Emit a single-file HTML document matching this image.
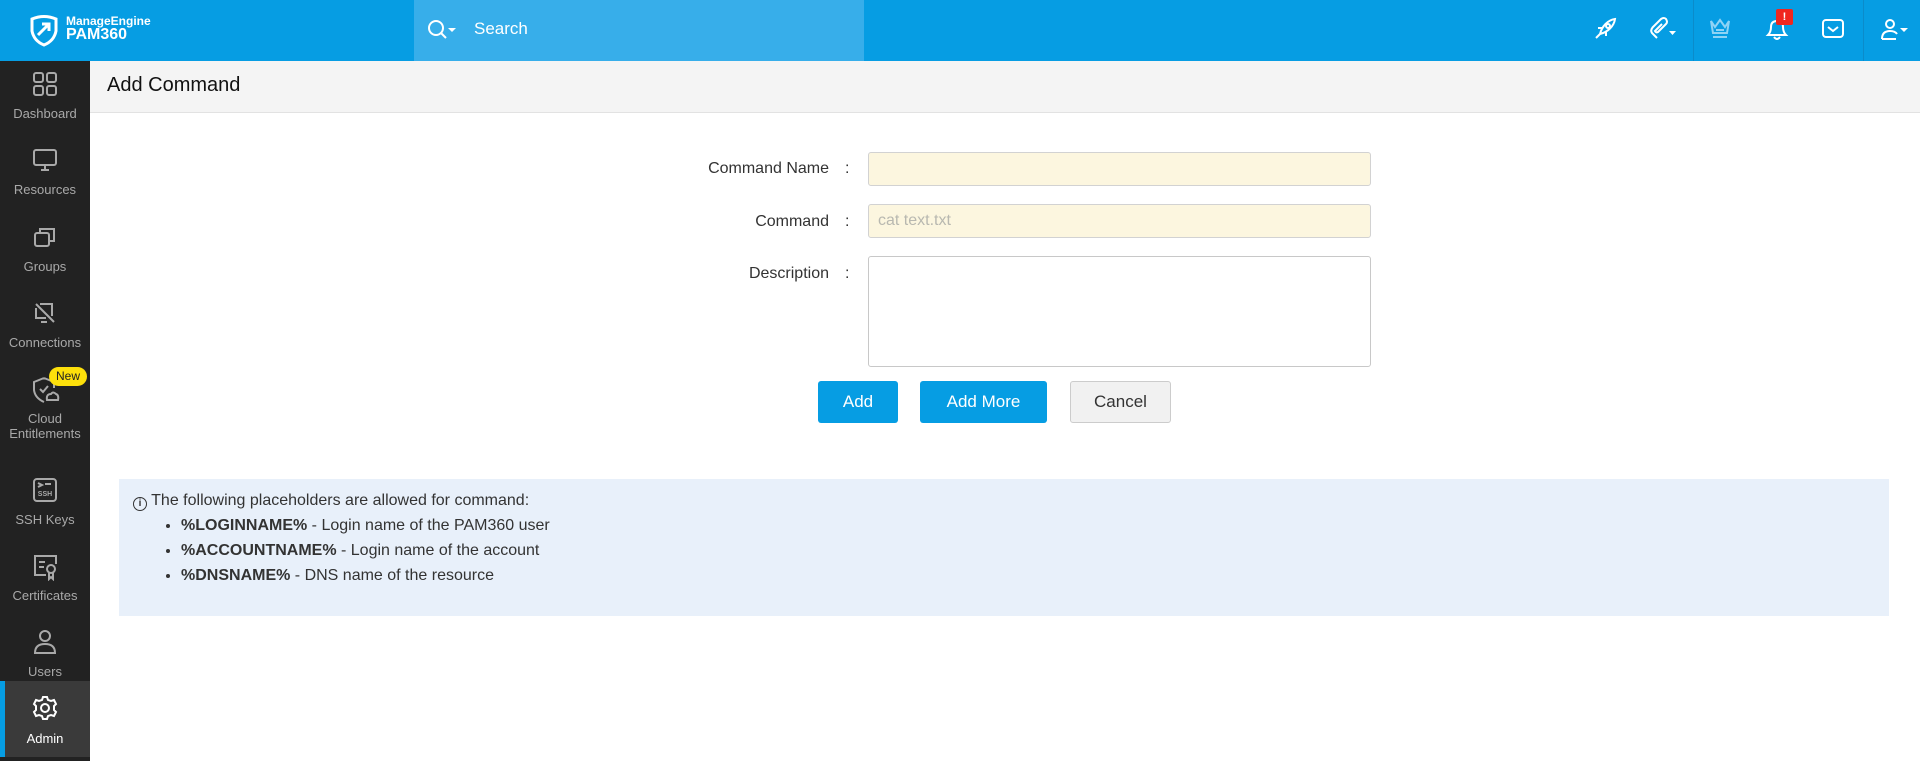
<!DOCTYPE html>
<html><head><meta charset="utf-8"><style>
*{box-sizing:border-box;margin:0;padding:0}
body{width:1920px;height:761px;overflow:hidden;font-family:"Liberation Sans",sans-serif;background:#fff;position:relative}
.top{position:absolute;left:0;top:0;width:1920px;height:61px;background:#069de3}
.search{position:absolute;left:414px;top:0;width:450px;height:61px;background:#37aeea;color:#fff;font-size:17px}
.side{position:absolute;left:0;top:61px;width:90px;height:700px;background:#222}
.it{position:absolute;left:0;width:90px;height:76px;color:#a9a9a9;font-size:13px;text-align:center}
.it svg{position:absolute;left:32px;top:10px}
.it span{position:absolute;left:0;right:0;top:45px;line-height:15px}
.ph{position:absolute;left:90px;top:61px;right:0;height:52px;background:#f4f4f4;border-bottom:1px solid #e2e2e2;font-size:20px;color:#111;padding:13px 17px}
.lbl{position:absolute;width:200px;left:629px;text-align:right;font-size:16px;color:#333}
.col{position:absolute;left:845px;font-size:16px;color:#333}
.inp{position:absolute;left:868px;width:503px;border:1px solid #d2d2d2;border-radius:3px;background:#fcf6df}
.btn{position:absolute;top:381px;height:42px;border-radius:3px;font-size:17px;text-align:center;line-height:42px}
.info{position:absolute;left:119px;top:479px;width:1770px;height:137px;background:#e8f0fa;font-size:16px;color:#333;padding:13px 14px}
.info ul{margin-left:48px;margin-top:2px}
.info li{line-height:25px}
</style></head><body>
<div class="top">
 <svg style="position:absolute;left:28px;top:13px" width="32" height="34" viewBox="0 0 32 34" fill="none" stroke="#fff" stroke-width="3"><path d="M4 6 Q16 1 28 6 V18 Q26 28 16 32 Q6 28 4 18Z"/><path d="M10 22 L21 11 M14 11 H21 V18"/></svg>
 <div style="position:absolute;left:66px;top:14px;color:#fff;font-weight:bold;font-size:12px">ManageEngine</div>
 <div style="position:absolute;left:66px;top:26px;color:#fff;font-weight:bold;font-size:16px">PAM360</div>
 <div class="search">
  <svg style="position:absolute;left:12px;top:18px" width="32" height="24" viewBox="0 0 32 24" fill="none" stroke="#fff" stroke-width="2"><circle cx="10" cy="10" r="7"/><path d="M15 15 L20 20"/><path d="M22 10 h8 l-4 4z" fill="#fff" stroke="none"/></svg>
  <span style="position:absolute;left:60px;top:19px">Search</span>
 </div>
 <svg style="position:absolute;left:1592px;top:16px" width="26" height="26" viewBox="0 0 26 26" fill="none" stroke="#fff" stroke-width="2"><path d="M8 18 C10 10 16 4 23 3 C22 10 16 16 8 18Z M6 12 L10 12 M14 20 L14 16 M4 22 L8 18"/><circle cx="16" cy="10" r="2"/></svg>
 <svg style="position:absolute;left:1648px;top:16px" width="30" height="26" viewBox="0 0 30 26" fill="none" stroke="#fff" stroke-width="2"><path d="M9 22 L4 17 Q2 14 5 11 L13 3 Q16 1 18 3 Q20 6 18 8 L10 16 Q8 17 7 15 L14 8"/><path d="M21 15 h7 l-3.5 4z" fill="#fff" stroke="none"/></svg>
 <div style="position:absolute;left:1693px;top:0;width:1px;height:61px;background:#0b8bca"></div>
 <svg style="position:absolute;left:1707px;top:17px" width="26" height="24" viewBox="0 0 26 24" fill="none" stroke="#8fd3f5" stroke-width="2"><path d="M4 4 L8 10 L13 3 L18 10 L22 4 L20 16 H6Z M9 13 H17 M6 20 H20"/></svg>
 <svg style="position:absolute;left:1763px;top:16px" width="28" height="26" viewBox="0 0 28 26" fill="none" stroke="#fff" stroke-width="2"><path d="M5 19 Q8 16 8 11 Q8 5 14 5 Q20 5 20 11 Q20 16 23 19Z M11 21 Q14 25 17 21"/></svg>
 <div style="position:absolute;left:1776px;top:9px;width:17px;height:16px;background:#f0261f;border-radius:2px;color:#fff;font-size:11px;font-weight:bold;text-align:center;line-height:16px">!</div>
 <svg style="position:absolute;left:1821px;top:18px" width="24" height="22" viewBox="0 0 24 22" fill="none" stroke="#fff" stroke-width="2"><rect x="2" y="2" width="20" height="17" rx="3"/><path d="M7 9 L12 13 L17 9"/></svg>
 <div style="position:absolute;left:1863px;top:0;width:1px;height:61px;background:#0b8bca"></div>
 <svg style="position:absolute;left:1880px;top:17px" width="30" height="26" viewBox="0 0 30 26" fill="none" stroke="#fff" stroke-width="2"><circle cx="10" cy="7" r="4"/><path d="M2 22 Q2 14 10 14 Q15 14 17 17 M2 22 H16"/><path d="M20 11 h8 l-4 4z" fill="#fff" stroke="none"/></svg>
</div>
<div class="side">
 <div class="it" style="top:0"><svg width="26" height="26" viewBox="0 0 26 26" fill="none" stroke="#a9a9a9" stroke-width="2"><rect x="2" y="2" width="9" height="9" rx="2"/><rect x="15" y="2" width="9" height="9" rx="2"/><rect x="2" y="15" width="9" height="9" rx="2"/><rect x="15" y="15" width="9" height="9" rx="2"/></svg><span>Dashboard</span></div>
 <div class="it" style="top:76px"><svg width="26" height="26" viewBox="0 0 26 26" fill="none" stroke="#a9a9a9" stroke-width="2"><rect x="2" y="3" width="22" height="15" rx="2"/><path d="M9 23 H17 M13 18 V23"/></svg><span>Resources</span></div>
 <div class="it" style="top:153px"><svg width="26" height="26" viewBox="0 0 26 26" fill="none" stroke="#a9a9a9" stroke-width="2"><rect x="3" y="9" width="14" height="13" rx="2"/><path d="M8 9 V5 H22 V17 H17"/></svg><span>Groups</span></div>
 <div class="it" style="top:229px"><svg width="26" height="26" viewBox="0 0 26 26" fill="none" stroke="#a9a9a9" stroke-width="2"><path d="M4 4 L22 22 M8 4 H20 V16 M4 8 V18 H14 M9 22 H15"/></svg><span>Connections</span></div>
 <div class="it" style="top:305px;height:90px"><svg width="28" height="28" viewBox="0 0 28 28" fill="none" stroke="#a9a9a9" stroke-width="2"><path d="M12 2 L22 6 V12 M12 2 L2 6 V14 Q3 22 12 26"/><path d="M8 13 L11 16 L16 10"/><path d="M15 24 Q14 18 19 18 Q21 15 24 18 Q27 19 26 24Z"/></svg><span style="top:45px">Cloud<br>Entitlements</span></div>
 <div style="position:absolute;left:49px;top:306px;width:38px;height:19px;background:#fde00b;border-radius:10px;color:#222;font-size:12px;text-align:center;line-height:19px">New</div>
 <div class="it" style="top:406px"><svg width="26" height="26" viewBox="0 0 26 26" fill="none" stroke="#a9a9a9" stroke-width="2"><rect x="2" y="2" width="22" height="22" rx="3"/><path d="M6 6 L10 8 L6 10 M13 7 H19"/><text x="13" y="19" font-size="7" font-family="Liberation Sans" font-weight="bold" fill="#a9a9a9" stroke="none" text-anchor="middle">SSH</text></svg><span>SSH Keys</span></div>
 <div class="it" style="top:482px"><svg width="28" height="28" viewBox="0 0 28 28" fill="none" stroke="#a9a9a9" stroke-width="2"><path d="M14 22 H3 V3 H24 V11"/><path d="M7 9 H13 M7 14 H12"/><circle cx="19" cy="16" r="4"/><path d="M17 20 V26 L19 24 L21 26 V20"/></svg><span>Certificates</span></div>
 <div class="it" style="top:558px"><svg width="26" height="26" viewBox="0 0 26 26" fill="none" stroke="#a9a9a9" stroke-width="2"><circle cx="13" cy="7" r="5"/><path d="M3 24 Q3 15 13 15 Q23 15 23 24Z"/></svg><span>Users</span></div>
 <div class="it" style="top:620px;background:#3a3a3a;color:#fff"><div style="position:absolute;left:0;top:0;width:5px;height:76px;background:#069de3"></div><svg style="top:14px" width="26" height="26" viewBox="0 0 26 26" fill="none" stroke="#fff" stroke-width="2"><path d="M11 2 H15 L16 5 L19 6 L22 5 L24 9 L22 11 V15 L24 17 L22 21 L19 20 L16 21 L15 24 H11 L10 21 L7 20 L4 21 L2 17 L4 15 V11 L2 9 L4 5 L7 6 L10 5Z"/><circle cx="13" cy="13" r="4"/></svg><span style="top:50px">Admin</span></div>
</div>
<div class="ph">Add Command</div>
<div class="lbl" style="top:160px">Command Name</div><div class="col" style="top:160px">:</div>
<div class="inp" style="top:152px;height:34px"></div>
<div class="lbl" style="top:213px">Command</div><div class="col" style="top:213px">:</div>
<div class="inp" style="top:204px;height:34px;color:#b8b8b0;font-size:16px;padding:7px 9px">cat text.txt</div>
<div class="lbl" style="top:265px">Description</div><div class="col" style="top:265px">:</div>
<div class="inp" style="top:256px;height:111px;background:#fff;border-color:#c8c8c8"></div>
<div class="btn" style="left:818px;width:80px;background:#069de3;color:#fff">Add</div>
<div class="btn" style="left:920px;width:127px;background:#069de3;color:#fff">Add More</div>
<div class="btn" style="left:1070px;width:101px;background:#f1f1f1;border:1px solid #ccc;color:#333;line-height:40px">Cancel</div>
<div class="info">
 <div><span style="display:inline-block;width:14px;height:14px;border:1.5px solid #333;border-radius:50%;font-size:10px;text-align:center;line-height:11px;font-weight:bold;vertical-align:-1px">i</span> The following placeholders are allowed for command:</div>
 <ul>
  <li><b>%LOGINNAME%</b> - Login name of the PAM360 user</li>
  <li><b>%ACCOUNTNAME%</b> - Login name of the account</li>
  <li><b>%DNSNAME%</b> - DNS name of the resource</li>
 </ul>
</div>
</body></html>
